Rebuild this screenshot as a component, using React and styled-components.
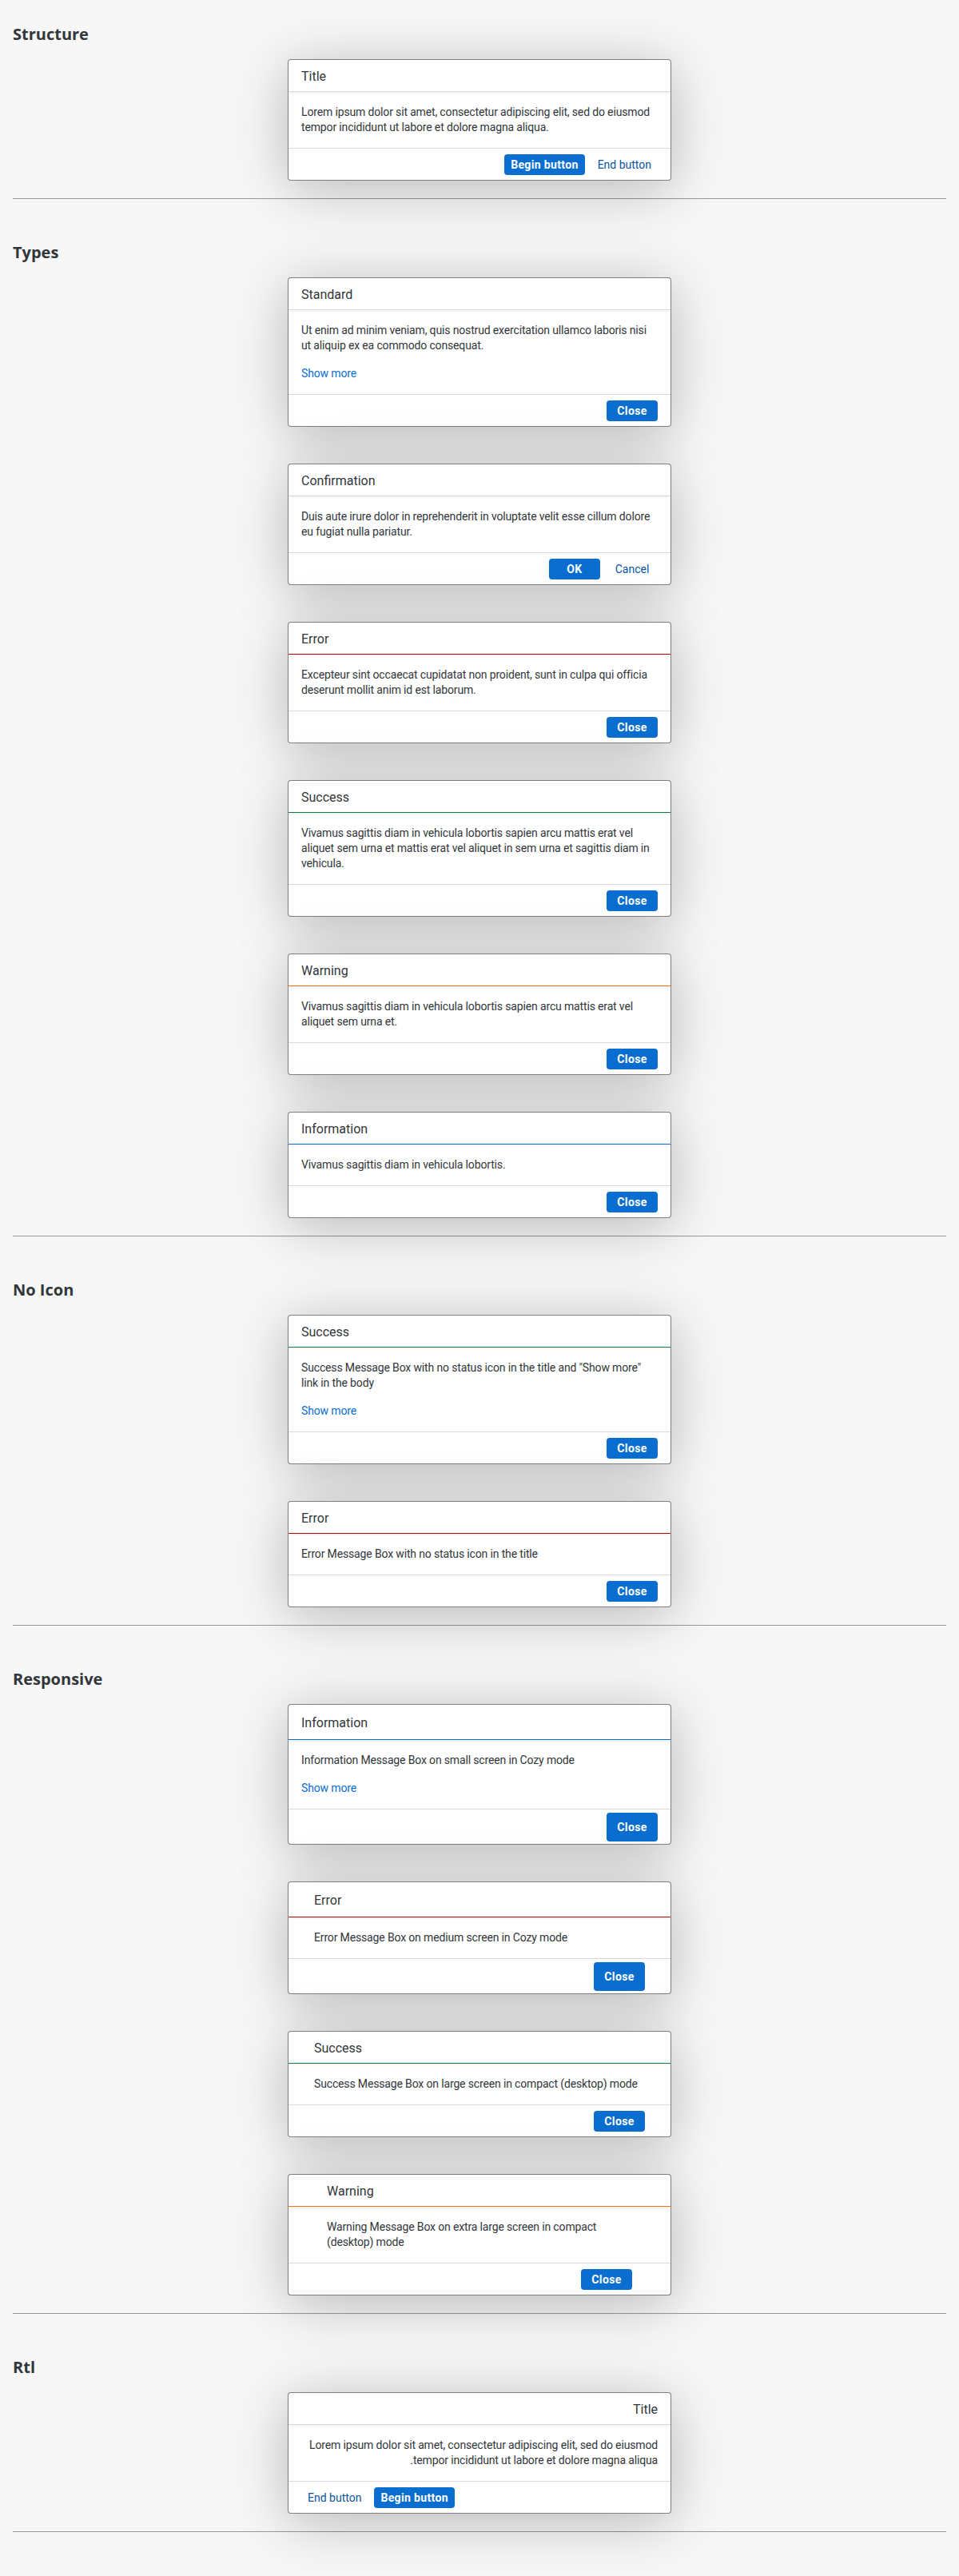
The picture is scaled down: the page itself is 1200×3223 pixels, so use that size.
import React from 'react';
import styled, { createGlobalStyle } from 'styled-components';

const GlobalStyle = createGlobalStyle`
  html, body {
    margin: 0;
    padding: 0;
    background: #f7f7f7;
  }

  body {
    font-family: Roboto, "Liberation Sans", Arial, sans-serif;
    color: #32363a;
  }
`;

const lineColors = {
  none: '#d9d9d9',
  error: '#bb0000',
  success: '#107e3e',
  warning: '#e9730c',
  information: '#0a6ed1',
};

const Page = styled.main`
  padding: 31px 16px 1px;
`;

const SectionTitle = styled.h3`
  margin: 0 0 19px;
  font-family: "Open Sans", Roboto, sans-serif;
  font-size: 20px;
  line-height: 24px;
  font-weight: 700;
  color: #32363a;
`;

const Stack = styled.div`
  display: flex;
  flex-direction: column;
  align-items: center;
  gap: 46px;
`;

const Divider = styled.hr`
  height: 0;
  margin: 22px 0 55px;
  border: 0;
  border-top: 1px solid #999;
`;

const Box = styled.div`
  box-sizing: border-box;
  width: 480px;
  overflow: hidden;
  background: #fff;
  border: 1px solid rgba(0, 0, 0, 0.5);
  border-radius: 4px;
  box-shadow: 0 10px 70px 0 rgba(0, 0, 0, 0.26);
  text-align: start;
`;

const Header = styled.header`
  position: relative;
  z-index: 1;
  box-sizing: border-box;
  display: flex;
  align-items: center;
  height: ${(p) => (p.$cozy ? 44 : 40)}px;
  padding: 0 ${(p) => p.$pad}px;
  font-size: 16px;
  color: #32363a;
  box-shadow: inset 0 -1px 0 0 ${(p) => lineColors[p.$state]}, 0 2px 2px 0 rgba(0, 0, 0, 0.05);
`;

const Body = styled.div`
  padding: 16px ${(p) => p.$pad}px;
  font-size: 14px;
  line-height: 19px;
  letter-spacing: -0.15px;
  color: #32363a;
`;

const ShowMore = styled.a`
  display: block;
  margin-top: 16px;
  color: #0a6ed1;
  text-decoration: none;
  cursor: pointer;
`;

const Footer = styled.footer`
  box-sizing: border-box;
  display: flex;
  align-items: center;
  justify-content: flex-end;
  gap: 8px;
  height: ${(p) => (p.$cozy ? 44 : 40)}px;
  padding: 0 ${(p) => p.$pad}px;
  border-top: 1px solid #d9d9d9;
`;

const Button = styled.button`
  box-sizing: border-box;
  min-width: 64px;
  height: ${(p) => (p.$cozy ? 36 : 26)}px;
  padding: 0 8px;
  border: 0;
  border-radius: 4px;
  font-family: Roboto, "Liberation Sans", sans-serif;
  font-size: 14px;
  cursor: pointer;
  background: ${(p) => (p.$emphasized ? '#0a6ed1' : 'transparent')};
  color: ${(p) => (p.$emphasized ? '#fff' : '#0854a0')};
  font-weight: ${(p) => (p.$emphasized ? 700 : 400)};
  letter-spacing: ${(p) => (p.$emphasized ? '0.35px' : '0')};
`;

function MessageBox({ title, text, state = 'none', showMore, buttons, pad = 16, cozy, rtl }) {
  return (
    <Box dir={rtl ? 'rtl' : 'ltr'}>
      <Header $state={state} $pad={pad} $cozy={cozy}>{title}</Header>
      <Body $pad={pad}>
        {text}
        {showMore && <ShowMore>Show more</ShowMore>}
      </Body>
      <Footer $pad={pad} $cozy={cozy}>
        {buttons.map((b) => (
          <Button key={b.label} $emphasized={b.emphasized} $cozy={cozy}>{b.label}</Button>
        ))}
      </Footer>
    </Box>
  );
}

const close = [{ label: 'Close', emphasized: true }];

const sections = [
  {
    title: 'Structure',
    boxes: [
      {
        title: 'Title',
        text: 'Lorem ipsum dolor sit amet, consectetur adipiscing elit, sed do eiusmod tempor incididunt ut labore et dolore magna aliqua.',
        buttons: [{ label: 'Begin button', emphasized: true }, { label: 'End button' }],
      },
    ],
  },
  {
    title: 'Types',
    boxes: [
      {
        title: 'Standard',
        text: 'Ut enim ad minim veniam, quis nostrud exercitation ullamco laboris nisi ut aliquip ex ea commodo consequat.',
        showMore: true,
        buttons: close,
      },
      {
        title: 'Confirmation',
        text: 'Duis aute irure dolor in reprehenderit in voluptate velit esse cillum dolore eu fugiat nulla pariatur.',
        buttons: [{ label: 'OK', emphasized: true }, { label: 'Cancel' }],
      },
      {
        title: 'Error',
        state: 'error',
        text: 'Excepteur sint occaecat cupidatat non proident, sunt in culpa qui officia deserunt mollit anim id est laborum.',
        buttons: close,
      },
      {
        title: 'Success',
        state: 'success',
        text: 'Vivamus sagittis diam in vehicula lobortis sapien arcu mattis erat vel aliquet sem urna et mattis erat vel aliquet in sem urna et sagittis diam in vehicula.',
        buttons: close,
      },
      {
        title: 'Warning',
        state: 'warning',
        text: 'Vivamus sagittis diam in vehicula lobortis sapien arcu mattis erat vel aliquet sem urna et.',
        buttons: close,
      },
      {
        title: 'Information',
        state: 'information',
        text: 'Vivamus sagittis diam in vehicula lobortis.',
        buttons: close,
      },
    ],
  },
  {
    title: 'No Icon',
    boxes: [
      {
        title: 'Success',
        state: 'success',
        text: 'Success Message Box with no status icon in the title and "Show more" link in the body',
        showMore: true,
        buttons: close,
      },
      {
        title: 'Error',
        state: 'error',
        text: 'Error Message Box with no status icon in the title',
        buttons: close,
      },
    ],
  },
  {
    title: 'Responsive',
    boxes: [
      {
        title: 'Information',
        state: 'information',
        text: 'Information Message Box on small screen in Cozy mode',
        showMore: true,
        cozy: true,
        pad: 16,
        buttons: close,
      },
      {
        title: 'Error',
        state: 'error',
        text: 'Error Message Box on medium screen in Cozy mode',
        cozy: true,
        pad: 32,
        buttons: close,
      },
      {
        title: 'Success',
        state: 'success',
        text: 'Success Message Box on large screen in compact (desktop) mode',
        pad: 32,
        buttons: close,
      },
      {
        title: 'Warning',
        state: 'warning',
        text: 'Warning Message Box on extra large screen in compact (desktop) mode',
        pad: 48,
        buttons: close,
      },
    ],
  },
  {
    title: 'Rtl',
    boxes: [
      {
        title: 'Title',
        rtl: true,
        text: 'Lorem ipsum dolor sit amet, consectetur adipiscing elit, sed do eiusmod tempor incididunt ut labore et dolore magna aliqua.',
        buttons: [{ label: 'Begin button', emphasized: true }, { label: 'End button' }],
      },
    ],
  },
];

export default function App() {
  return (
    <>
      <GlobalStyle />
      <Page>
        {sections.map((section) => (
          <section key={section.title}>
            <SectionTitle>{section.title}</SectionTitle>
            <Stack>
              {section.boxes.map((box, i) => (
                <MessageBox key={i} {...box} />
              ))}
            </Stack>
            <Divider />
          </section>
        ))}
      </Page>
    </>
  );
}
